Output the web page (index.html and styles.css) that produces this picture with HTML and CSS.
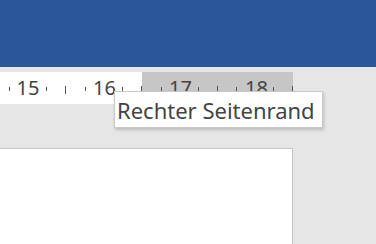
FILE: index.html
```html
<!DOCTYPE html>
<html lang="de">
<head>
    <meta charset="UTF-8"/>
    <title>Lineal</title>
    <link rel="stylesheet" href="styles.css">
</head>
<body>
    <div class="ribbon"></div>

    <div class="workspace">
        <div class="ruler">
            <div class="ruler-text"></div>
            <div class="ruler-margin"></div>

            <span class="tick" style="left:9px"></span>
            <span class="num" style="left:28px">15</span>
            <span class="tick" style="left:46px"></span>
            <span class="tick long" style="left:65px"></span>
            <span class="tick" style="left:85px"></span>
            <span class="num" style="left:104.5px">16</span>
            <span class="tick" style="left:122px"></span>
            <span class="tick long" style="left:141px"></span>
            <span class="tick" style="left:161px"></span>
            <span class="num" style="left:180.5px">17</span>
            <span class="tick" style="left:198px"></span>
            <span class="tick long" style="left:217px"></span>
            <span class="tick" style="left:236px"></span>
            <span class="num" style="left:256.5px">18</span>
            <span class="tick" style="left:273px"></span>
            <span class="tick long" style="left:292px"></span>
        </div>

        <div class="page"></div>
    </div>

    <div class="tooltip">Rechter Seitenrand</div>
</body>
</html>
```

FILE: styles.css
```css
body {
    margin: 0;
    height: 244px;
    overflow: hidden;
    background: #e6e6e6;
    font-family: "Segoe UI", "Noto Sans", sans-serif;
    display: flex;
    flex-direction: column;
}
.ribbon {
    height: 67px;
    background: #2b579a;
}
.workspace {
    flex: 1;
    display: flex;
    flex-direction: column;
    gap: 44px;
    padding-top: 5px;
}
.ruler {
    position: relative;
    width: 293px;
    height: 32px;
    display: flex;
    color: #444;
}
.ruler-text {
    width: 142px;
    background: #fff;
}
.ruler-margin {
    flex: 1;
    background: #c6c6c6;
}
.tick {
    position: absolute;
    top: 15px;
    width: 1px;
    height: 4px;
    background: #555;
}
.tick.long {
    top: 14px;
    height: 8px;
}
.num {
    position: absolute;
    top: 3px;
    font-size: 20px;
    line-height: 26px;
    transform: translateX(-50%);
}
.page {
    flex: 1;
    width: 292px;
    background: #fff;
    border-top: 1px solid #c6c6c6;
    border-right: 1px solid #c6c6c6;
}
.tooltip {
    position: absolute;
    left: 114px;
    top: 91px;
    width: 209px;
    height: 37px;
    box-sizing: border-box;
    padding-left: 2px;
    background: #fff;
    border: 1px solid #c8c8c8;
    box-shadow: 1px 2px 3px rgba(0, 0, 0, 0.18);
    color: #444;
    font-size: 22px;
    line-height: 37px;
    white-space: nowrap;
}
```
